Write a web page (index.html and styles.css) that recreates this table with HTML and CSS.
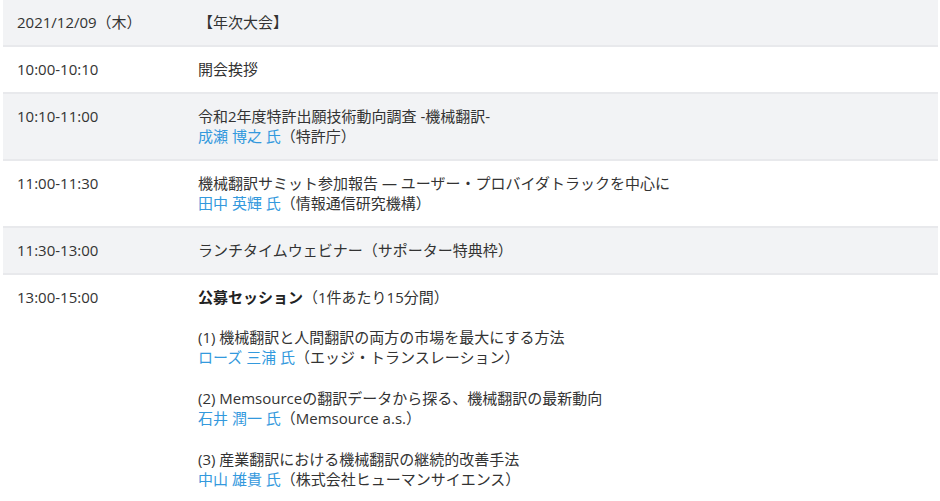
FILE: index.html
```html
<!DOCTYPE html>
<html lang="ja">
<head>
<meta charset="utf-8">
<link rel="stylesheet" href="styles.css">
</head>
<body>
<div class="wrap">
<table class="schedule">
  <colgroup><col class="c-time"><col></colgroup>
  <tr class="gray"><td>2021/12/09（木）</td><td>【年次大会】</td></tr>
  <tr><td>10:00-10:10</td><td>開会挨拶</td></tr>
  <tr class="gray"><td>10:10-11:00</td><td>令和2年度特許出願技術動向調査 -機械翻訳-<br><span class="name">成瀬 博之 氏</span>（特許庁）</td></tr>
  <tr><td>11:00-11:30</td><td>機械翻訳サミット参加報告 — ユーザー・プロバイダトラックを中心に<br><span class="name">田中 英輝 氏</span>（情報通信研究機構）</td></tr>
  <tr class="gray"><td>11:30-13:00</td><td>ランチタイムウェビナー（サポーター特典枠）</td></tr>
  <tr><td>13:00-15:00</td><td><strong>公募セッション</strong>（1件あたり15分間）<br><br>(1) 機械翻訳と人間翻訳の両方の市場を最大にする方法<br><span class="name">ローズ 三浦 氏</span>（エッジ・トランスレーション）<br><br>(2) Memsourceの翻訳データから探る、機械翻訳の最新動向<br><span class="name">石井 潤一 氏</span>（Memsource a.s.）<br><br>(3) 産業翻訳における機械翻訳の継続的改善手法<br><span class="name">中山 雄貴 氏</span>（株式会社ヒューマンサイエンス）</td></tr>
</table>
</div>
</body>
</html>
```
FILE: styles.css
```css
html, body {
  margin: 0;
  padding: 0;
  background: #fff;
}
.wrap {
  padding: 0 2px 0 3px;
}
.schedule {
  width: 100%;
  border-collapse: collapse;
  font-family: "Open Sans", "Noto Sans CJK JP", sans-serif;
  font-size: 15px;
  line-height: 20.3px;
  color: #333;
}
.c-time {
  width: 181px;
}
.schedule td {
  padding: 12px 14px 12.5px;
  vertical-align: top;
  border-bottom: 2px solid #e8e9ec;
}
.schedule tr.gray td {
  background: #f2f3f5;
}
.name {
  color: #3399dd;
}
.schedule strong {
  font-weight: 700;
  color: #222;
}
```
